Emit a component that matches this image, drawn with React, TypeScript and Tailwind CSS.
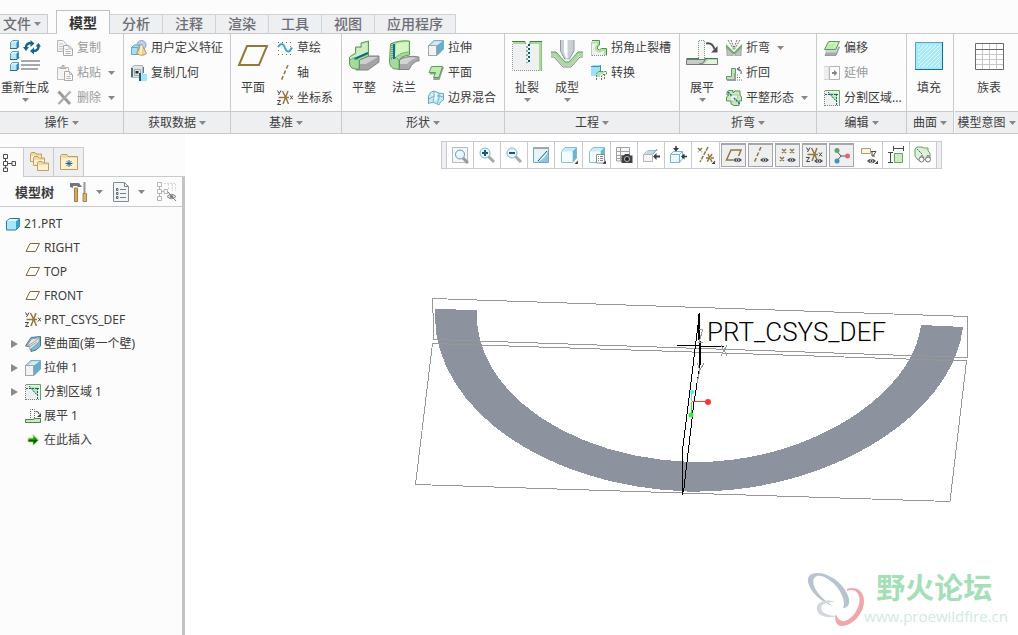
import type { ReactNode } from "react";

type IconProps = { w?: number; h?: number; children: ReactNode };

function Icon({ w = 16, h = w, children }: IconProps) {
  return (
    <svg width={w} height={h} viewBox={`0 0 ${w} ${h}`} fill="none" aria-hidden="true" className="shrink-0">
      {children}
    </svg>
  );
}

const Caret = () => (
  <Icon w={7} h={4}>
    <path d="M0 0H7L3.5 4Z" fill="#878787" />
  </Icon>
);

/* ---------- shared shapes ---------- */

const Cube = ({ x, y }: { x: number; y: number }) => (
  <g transform={`translate(${x} ${y})`}>
    <path d="M.5 2.5L2.5 .5H8.5V6.5L6.5 8.5H.5Z" fill="#b4e8f8" stroke="#5b9db8" />
    <path d="M6.5 2.5L8.5 .5V6.5L6.5 8.5Z" fill="#2b86ab" />
    <path d="M1 2.5L2.5 1H8L6.5 2.5Z" fill="#e2f6fc" />
    <path d="M0 8.500H7L9 6.500" stroke="#1f6c8d" />
  </g>
);

const Eye = ({ x, y }: { x: number; y: number }) => (
  <g transform={`translate(${x} ${y})`}>
    <path d="M0 3Q4.500 -1.500 9 3Q4.500 7.500 0 3Z" fill="#4b4f54" />
    <circle cx="4.500" cy="3" r="1.800" fill="#e8e8e8" />
    <circle cx="4.500" cy="3" r="1" fill="#333" />
  </g>
);

const Corner = () => <path d="M18 14.500V18H14.500Z" fill="#444" />;

/* ---------- ribbon icons ---------- */

const RegenerateIcon = () => (
  <Icon w={32}>
    <Cube x={1} y={0} />
    <Cube x={1} y={11} />
    <Cube x={1} y={22} />
    <path d="M17 8C16.500 4.500 19 3 22.500 3" stroke="#15668a" strokeWidth="2.500" />
    <path d="M21.500 0L25.500 3.500L21.500 7Z" fill="#15668a" />
    <path d="M29.500 5C30 9 28 11 24.500 11" stroke="#15668a" strokeWidth="2.500" />
    <path d="M25 7.500L21 11L25 14.500Z" fill="#15668a" />
    <path d="M14 7H20L17 11Z" fill="#15668a" />
    <path d="M26.500 6.500H32L29.500 3Z" fill="#15668a" />
    <path d="M12 21H31M12 25H31M12 29H29" stroke="#a6a8ab" strokeWidth="2" />
  </Icon>
);

const CopyIcon = () => (
  <Icon>
    <path d="M.5 .5H6L9.500 4V11.500H.5Z" fill="#f4f4f4" stroke="#b4b4b4" />
    <path d="M2 4H6M2 6.500H6M2 9H6" stroke="#c4c4c4" />
    <path d="M6.500 5.500H12L15.500 9V15.500H6.500Z" fill="#f8f8f8" stroke="#a8a8a8" />
    <path d="M12 5.500V9H15.500M8.500 9.500H11M8.500 11.500H13.500M8.500 13.500H13.500" stroke="#b5b5b5" />
  </Icon>
);

const PasteIcon = () => (
  <Icon>
    <path d="M.5 2.500H11.500V14.500H.5Z" fill="#f5f5f5" stroke="#bdbdbd" />
    <path d="M3 3.500L4.500 1.500H5.500V0H7V1.500L9 3.500Z" fill="#ccc" stroke="#adadad" />
    <path d="M7.500 6.500H12.500L15.500 9.500V15.500H7.500Z" fill="#fafafa" stroke="#a8a8a8" />
    <path d="M12.500 6.500V9.500H15.500M9.500 11.500H13.500M9.500 13.500H13.500" stroke="#b8b8b8" />
  </Icon>
);

const DeleteIcon = () => (
  <Icon>
    <path d="M1.500 1.500L13 14" stroke="#9b9b9b" strokeWidth="3" />
    <path d="M13.500 1.500L1.500 14" stroke="#a8a8a8" strokeWidth="2" />
  </Icon>
);

const FeatureIcon = () => (
  <Icon>
    <circle cx="10.500" cy="5" r="4.500" fill="#c2cdee" stroke="#8d9ccc" />
    <path d="M.5 7.500L3 5H9V12L7 14.500H.5Z" fill="#a9def0" stroke="#5fabc7" />
    <path d="M.5 7.500H7V14.500M7 7.500L9 5" stroke="#5fabc7" />
    <path d="M10.500 4L15.500 13.500Q11 17 5.500 13.500Z" fill="#f2cf91" stroke="#b8965b" />
    <path d="M10.500 5.500L9.500 14.500" stroke="#fff0cf" strokeWidth="2" />
  </Icon>
);

const CopyGeometryIcon = () => (
  <Icon>
    <path d="M.5 2.500L3 .5H11.500V9.500L9 12.500H.5Z" fill="#e3e4e6" stroke="#b2b4b7" />
    <path d="M0 3H2V12H0Z" fill="#4a7282" />
    <path d="M3.500 4.500H9.500V10.500H3.500Z" fill="#e6e6e6" stroke="#a2a2a2" />
    <path d="M4.500 6H7.500V8.500H4.500Z" fill="#1f2d38" />
    <path d="M9 9H16V16H9Z" fill="#a2e4fa" />
    <path d="M9 8V16" stroke="#155d7c" strokeWidth="2" />
    <path d="M12.500 2V8" stroke="#3c83a2" />
  </Icon>
);

const DatumPlaneIcon = () => (
  <Icon w={32}>
    <path d="M10 6H30L22 25H2Z" fill="#fdfcf9" stroke="#94763f" strokeWidth="2" />
  </Icon>
);

const SketchIcon = () => (
  <Icon>
    <path d="M1 2.500H16M1 14.500H16" stroke="#666" strokeDasharray="1 3" />
    <path d="M1 6.500H3M13 6.500H16M1 10.500H3M13 10.500H16" stroke="#888" strokeDasharray="1 2" />
    <path d="M1 7C5 1.500 7 5 8 8C9.500 12 12 13.500 15 7.500" stroke="#3da3ce" strokeWidth="2" />
  </Icon>
);

const AxisIcon = () => (
  <Icon>
    <path d="M11 0L4 16" stroke="#94763f" strokeWidth="1.500" strokeDasharray="4 2" />
  </Icon>
);

const CsysShape = () => (
  <>
    <path d="M1.500 7.500H12M5.500 1L9 8L11.500 14M11 1L6 14" stroke="#94763f" strokeWidth="1.500" />
    <path d="M.5 .5L2 3M4 .5L1.500 5M0 10.500H3.500L.5 14.500H4M13 5.500L16 9.500M16 5.500L13 9.500" stroke="#444" />
  </>
);
const CsysIcon = () => (
  <Icon>
    <CsysShape />
  </Icon>
);

const FlatWallIcon = () => (
  <Icon w={32}>
    <path d="M11 20L20 16H31V22L20 30H8Z" fill="#a4a4a6" stroke="#838385" />
    <path d="M12 20L20 17H30L18 24H11Z" fill="#cfcfd1" />
    <path d="M1.500 17L7.500 13V7H13V3L20.500 1V16L11.500 20V29H8C3.500 29 1.500 26 1.500 23Z" fill="#a8d89b" stroke="#579f57" />
    <path d="M8.500 14V8H14V4L19.500 2.500V12L6 18Z" fill="#cdeebf" />
    <path d="M6.500 19L20 13" stroke="#0b668f" strokeWidth="2" />
    <path d="M2 20Q7 16 11 21V28" stroke="#579f57" strokeDasharray="1 1" />
    <path d="M2 18L8 15" stroke="#e6f8dc" />
  </Icon>
);

const FlangeIcon = () => (
  <Icon w={32}>
    <path d="M12 19Q20 15 31 17V21Q26 20 21 29.500H10Z" fill="#a8a9ac" stroke="#838385" />
    <path d="M12 20Q20 16 29 18Q23 19 19 24H11Z" fill="#d3d4d6" />
    <path d="M2.500 4Q10 0 21.500 1V15Q13 16 11.500 20V29H7C3 28 1.500 25 1.500 21Z" fill="#a8d89b" stroke="#579f57" />
    <path d="M8 4Q13 1.500 20.500 2V12Q12 12 7 18Z" fill="#d6f5bf" />
    <path d="M6 4V19" stroke="#0a6da0" strokeWidth="2" />
    <path d="M4 3V19M3 19Q9 16 11 21V28M7 18Q13 12 21 12" stroke="#367b4b" strokeDasharray="1 1" />
  </Icon>
);

const ExtrudeIcon = () => (
  <Icon>
    <path d="M.5 5.500L6 .5H15.500V9L9 15.500H.5Z" fill="#a9d7ea" stroke="#7db0c5" />
    <path d="M9 5.500L15.500 .5V9L9 15.500Z" fill="#68acc9" />
    <path d="M3 5L7 1.500H14L9 5Z" fill="#d5ecf6" />
    <path d="M.5 5.500H8.500V15.500H.5Z" fill="#f1f2f3" stroke="#a3a5a7" />
  </Icon>
);

const PlanarIcon = () => (
  <Icon>
    <path d="M4 2H16L11.500 15H5L7 9.500H1.500Z" fill="#9e9fa0" />
    <path d="M3.500 1.500H14.500L11 12.500H5.500L7.500 7.500H1Z" fill="#bcedaa" stroke="#609a62" />
  </Icon>
);

const BlendIcon = () => (
  <Icon>
    <path d="M.5 7Q1 2 6 1Q11 4 15.500 3.500V10Q12 11 11 15Q5 11 .5 13.500Z" fill="#c8ecf9" stroke="#6ba8c0" />
    <path d="M6 1Q7 6 5 12M11 3Q12 8 9 14M1 9Q8 4 15.500 7" stroke="#72afc7" />
    <path d="M7.500 3Q8.500 6 7 10" stroke="#fff" strokeWidth="2" />
  </Icon>
);

const RipIcon = () => (
  <Icon w={32}>
    <path d="M2 3H16V22H18V3H28V30H2Z" fill="#eef0f2" />
    <path d="M1.500 4V30.500H28" stroke="#909396" strokeDasharray="1 1" />
    <path d="M1 1.500H14V4M19 4V1.500H31" stroke="#457d43" />
    <path d="M2 3H13M20 3H29V31" stroke="#a7db91" strokeWidth="2" />
    <path d="M30.500 2V31" stroke="#8fc37d" />
    <path d="M16 6V23" stroke="#8fb09a" strokeWidth="2" strokeDasharray="2 2" />
    <path d="M18 4V23" stroke="#0b587a" strokeWidth="2" strokeDasharray="2 2" />
  </Icon>
);

const FormIcon = () => (
  <Icon w={32}>
    <path d="M9.500 0V11L14 19.500H18L23 11V0Z" fill="#c8cfd5" />
    <path d="M13 0V12L15 18H16.500V0Z" fill="#fff" />
    <path d="M9.500 0V11L14 19.500M23 0V11L18 19.500" stroke="#8f989f" />
    <path d="M0 14H4L13 24H19L28 14H32" stroke="#a9daa0" strokeWidth="4" />
    <path d="M0 12H5L14 22H18L27 12H32" stroke="#609a5f" />
    <path d="M0 17H3L12 27H20L29 17H32" stroke="#808080" />
  </Icon>
);

const CornerReliefIcon = () => (
  <Icon>
    <path d="M1 1H8V5Q5 6 6 9Q8 12 11 8H15V15H1Z" fill="#edf0ed" />
    <path d="M.5 15.500V2M1 15.500H15" stroke="#888" strokeDasharray="1 1" />
    <path d="M1 2.500H7V5Q4.500 6 5 9.500Q7.500 13 11.500 10H14V15" stroke="#b2dfa2" strokeWidth="2" />
    <path d="M1 .5H8.500V5Q5.500 6 6.500 9Q8.500 11 10.500 8.500H15.500V15.500" stroke="#4d8f4e" />
  </Icon>
);

const ConversionIcon = () => (
  <Icon>
    <path d="M0 2L2 0H10V9L8 11H0Z" fill="#9fe2f8" />
    <path d="M0 1.500H8L9.500 .5V7" stroke="#3c8db0" />
    <path d="M5.500 15V8.500L8 6.500H15.500V9L13.500 10V15M10.500 15V11L12 9.500H15" stroke="#5b8352" strokeDasharray="2 1" />
    <path d="M6 9L8 7H14L12 9H9V12H6Z" fill="#b9dfac" />
  </Icon>
);

const UnbendIcon = () => (
  <Icon w={32}>
    <path d="M.5 19.500H18L21.500 18.500H31.500V24.500H.5Z" fill="#c9cbcb" stroke="#747974" />
    <path d="M.5 18.500H13M19 18.500H31.500" stroke="#3e8540" />
    <path d="M22 20H31V24H18Z" fill="#e3f4dc" />
    <path d="M12.500 18V.5H18.500V18" fill="#f4f4f4" stroke="#6fa171" strokeDasharray="1 1" />
    <path d="M13 24Q19 24 19 18" stroke="#4e854c" />
    <path d="M20 3.500Q26 2 28.500 9" stroke="#4c5053" strokeWidth="2" />
    <path d="M31.500 6V12.500H25Z" fill="#4c5053" />
  </Icon>
);

const BendIcon = () => (
  <Icon>
    <path d="M0 7L7 14V16H1V11ZM16 7L9 14V16H15V11Z" fill="#bfc1c3" stroke="#a0a2a4" />
    <path d="M0 5L8 13L16 5" stroke="#6ba268" strokeWidth="2" />
    <path d="M0 4L8 12L16 4" stroke="#c1ecb5" />
    <path d="M2 0L8 10M14 0L8 10M5 0L8 8M11 0L8 8" stroke="#70746f" strokeDasharray="2 1" />
  </Icon>
);

const BendBackIcon = () => (
  <Icon>
    <path d="M.5 11.500H5.500V3.500H9.500V14.500H.5Z" fill="#c0e4ae" stroke="#629a63" />
    <path d="M1 15H9V8" stroke="#9b9e9f" strokeWidth="2" />
    <path d="M11 10H13M11 12.500H15M11 15H16" stroke="#4c8750" strokeDasharray="1 1" />
    <path d="M15 9Q16 4 12 4M14 2L11 4L14 6" stroke="#53575a" />
  </Icon>
);

const FlatPatternIcon = () => (
  <Icon>
    <path d="M1 2L3 .5H7V3L9 1H14V5L15.500 7V11H13V15.500H8L5 14V11H.5V7L3 5H1Z" fill="#cbe8bf" stroke="#559456" />
    <path d="M4 7Q6 4 9 5H12L11 9Q8 12 6 11" fill="#eef3ec" stroke="#a8cc9a" />
    <path d="M2 2L6 6M8 8L14 14" stroke="#13698d" strokeWidth="1.500" strokeDasharray="2 1" />
  </Icon>
);

const OffsetIcon = () => (
  <Icon>
    <path d="M5 7H15.500L12 15.500H1Z" fill="#a8aaad" stroke="#97999c" />
    <path d="M5 4L15 6L12 12.500H1L2 9Z" fill="#d2d4d6" />
    <path d="M4.500 1.500H15.500L11.500 9.500H.5Z" fill="#baf0a7" stroke="#609a62" />
    <path d="M5 3H13L10 8" stroke="#d9fbc9" />
  </Icon>
);

const ExtendIcon = () => (
  <Icon>
    <path d="M0 1.500H5V14.500H0" fill="#eceef0" stroke="#d4d6d8" />
    <path d="M5.500 1.500H15.500V14.500H5.500Z" fill="#fff" stroke="#b4b4b4" />
    <path d="M8 8H11" stroke="#858585" strokeWidth="2" />
    <path d="M10 5L13.500 8L10 11Z" fill="#858585" />
  </Icon>
);

const SplitAreaIcon = () => (
  <Icon>
    <path d="M0 0H16V16H0Z" fill="#eff1f0" />
    <path d="M.5 16V1M1 15.500H15" stroke="#797d7f" strokeDasharray="1 1" />
    <path d="M1 .5H15.500V16" stroke="#67a662" />
    <path d="M3.500 2.500H13V12Z" fill="#b9e9b0" />
    <path d="M1 4.500H14M4 2L13 12M12.500 4V15" stroke="#175f80" strokeDasharray="2 1" />
  </Icon>
);

const FillIcon = () => (
  <Icon w={32}>
    <defs>
      <pattern id="hatch" width="4" height="4" patternUnits="userSpaceOnUse">
        <path d="M-1 1L1 -1M0 4L4 0M3 5L5 3" stroke="#e9fbff" />
      </pattern>
    </defs>
    <path d="M2 2H30V30H2Z" fill="#a6e9fb" />
    <path d="M5 5H27V27H5Z" fill="url(#hatch)" />
    <path d="M2.500 2.500H29.500V29.500H2.500Z" stroke="#5aa3bf" />
    <path d="M2 29.500H29.500V2" stroke="#166e90" />
  </Icon>
);

const FamilyTableIcon = () => (
  <Icon w={32}>
    <path d="M2.500 3.500H30.500V29.500H2.500Z" fill="#fff" />
    <path d="M9.500 4V29M16.500 4V29M23.500 4V29M3 14.500H30M3 19.500H30M3 24.500H30" stroke="#c6c6c6" />
    <path d="M2.500 3.500H30.500V29.500H2.500ZM3 9.500H30" stroke="#6a6a6d" />
  </Icon>
);

/* ---------- ribbon building blocks ---------- */

function BigTool({ icon, label, menu }: { icon: ReactNode; label: string; menu?: boolean }) {
  return (
    <button type="button" className="flex min-w-10 flex-col items-center pt-1.5 whitespace-nowrap">
      {icon}
      <span className="mt-2 leading-4">{label}</span>
      {menu && (
        <span className="mt-0.5 flex">
          <Caret />
        </span>
      )}
    </button>
  );
}

type Tool = { icon: ReactNode; label: string; menu?: boolean; disabled?: boolean };

function ToolList({ tools }: { tools: Tool[] }) {
  return (
    <div className="flex flex-col gap-px pt-0.5">
      {tools.map((t) => (
        <button
          key={t.label}
          type="button"
          disabled={t.disabled}
          className="flex h-6 items-center gap-1 whitespace-nowrap disabled:text-[#999]"
        >
          {t.icon}
          <span>{t.label}</span>
          {t.menu && (
            <span className="ml-[3px]">
              <Caret />
            </span>
          )}
        </button>
      ))}
    </div>
  );
}

function Group({ title, className, body, children }: { title: string; className: string; body?: string; children: ReactNode }) {
  return (
    <section className={`flex shrink-0 flex-col border-[#c9cacc] ${className}`}>
      <div className={`flex h-[77px] items-start ${body ?? ""}`}>{children}</div>
      <button
        type="button"
        className="flex h-[22px] items-center justify-center gap-[3px] border-t border-[#c9cacc] bg-[#eeeff1] whitespace-nowrap"
      >
        {title}
        <Caret />
      </button>
    </section>
  );
}

function Ribbon() {
  return (
    <div className="flex overflow-hidden border-b border-[#c9cacc]">
      <Group title="操作" className="w-[124px] border-r" body="gap-2 pl-px">
        <BigTool icon={<RegenerateIcon />} label="重新生成" menu />
        <ToolList
          tools={[
            { icon: <CopyIcon />, label: "复制", disabled: true },
            { icon: <PasteIcon />, label: "粘贴", menu: true, disabled: true },
            { icon: <DeleteIcon />, label: "删除", menu: true, disabled: true },
          ]}
        />
      </Group>
      <Group title="获取数据" className="w-[107px] border-r" body="pl-[7px]">
        <ToolList
          tools={[
            { icon: <FeatureIcon />, label: "用户定义特征" },
            { icon: <CopyGeometryIcon />, label: "复制几何" },
          ]}
        />
      </Group>
      <Group title="基准" className="w-[111px] border-r" body="gap-1 pl-0.5">
        <BigTool icon={<DatumPlaneIcon />} label="平面" />
        <ToolList
          tools={[
            { icon: <SketchIcon />, label: "草绘" },
            { icon: <AxisIcon />, label: "轴" },
            { icon: <CsysIcon />, label: "坐标系" },
          ]}
        />
      </Group>
      <Group title="形状" className="w-[163px] border-r" body="pl-0.5">
        <BigTool icon={<FlatWallIcon />} label="平整" />
        <BigTool icon={<FlangeIcon />} label="法兰" />
        <div className="pl-1">
          <ToolList
            tools={[
              { icon: <ExtrudeIcon />, label: "拉伸" },
              { icon: <PlanarIcon />, label: "平面" },
              { icon: <BlendIcon />, label: "边界混合" },
            ]}
          />
        </div>
      </Group>
      <Group title="工程" className="w-[175px] border-r" body="pl-0.5">
        <BigTool icon={<RipIcon />} label="扯裂" menu />
        <BigTool icon={<FormIcon />} label="成型" menu />
        <div className="pl-1">
          <ToolList
            tools={[
              { icon: <CornerReliefIcon />, label: "拐角止裂槽" },
              { icon: <ConversionIcon />, label: "转换" },
            ]}
          />
        </div>
      </Group>
      <Group title="折弯" className="w-[137px] border-r" body="gap-1 pl-0.5">
        <BigTool icon={<UnbendIcon />} label="展平" menu />
        <ToolList
          tools={[
            { icon: <BendIcon />, label: "折弯", menu: true },
            { icon: <BendBackIcon />, label: "折回" },
            { icon: <FlatPatternIcon />, label: "平整形态", menu: true },
          ]}
        />
      </Group>
      <Group title="编辑" className="w-[90px] border-r" body="pl-[7px]">
        <ToolList
          tools={[
            { icon: <OffsetIcon />, label: "偏移" },
            { icon: <ExtendIcon />, label: "延伸", disabled: true },
            { icon: <SplitAreaIcon />, label: "分割区域..." },
          ]}
        />
      </Group>
      <Group title="曲面" className="w-[47px] border-r" body="pl-0.5">
        <BigTool icon={<FillIcon />} label="填充" />
      </Group>
      <Group title="模型意图" className="min-w-16 grow pl-px" body="pl-3.5">
        <BigTool icon={<FamilyTableIcon />} label="族表" />
      </Group>
    </div>
  );
}

function RibbonTabs() {
  const rest = ["分析", "注释", "渲染", "工具", "视图", "应用程序"];
  return (
    <nav className="flex h-[34px] items-end border-b border-[#c9cacc] text-[14px] font-medium text-[#6d6e75]">
      <button
        type="button"
        className="mr-2 flex h-[19px] items-center gap-[3px] border-t border-r border-[#c9cacc] bg-[#eeeff1] pr-1.5 pl-[3px] whitespace-nowrap"
      >
        文件
        <Caret />
      </button>
      <button
        type="button"
        className="-mb-px h-6 border border-b-0 border-[#c0c1c4] bg-[#fcfcfc] px-3 font-bold whitespace-nowrap text-[#333]"
      >
        模型
      </button>
      {rest.map((t) => (
        <button
          key={t}
          type="button"
          className="flex h-[19px] items-center border-t border-r border-[#d0d1d4] bg-[#eeeff1] px-3 whitespace-nowrap"
        >
          {t}
        </button>
      ))}
    </nav>
  );
}

/* ---------- graphics toolbar ---------- */

const Magnifier = ({ sign }: { sign?: string }) => (
  <>
    <path d="M10.500 10.500L16 16" stroke="#a4a8ab" strokeWidth="3" />
    <circle cx="7" cy="7" r="5" fill="#eaf7fc" stroke="#7fb4ca" />
    {sign && <path d={sign} stroke="#155976" strokeWidth="2" />}
  </>
);

const ViewCube = () => (
  <>
    <path d="M1.500 5.500L5 1.500H16.500V12L12.500 16.500H1.500Z" fill="#c8ecf8" stroke="#86bed2" />
    <path d="M12.500 5.500L16.500 1.500V12L12.500 16.500Z" fill="#6cb3cf" />
    <path d="M2 5.500H12.500V16H2Z" fill="#f5fcff" />
  </>
);

const toolbar: { name: string; on?: boolean; menu?: boolean; icon: ReactNode }[] = [
  {
    name: "重新调整",
    icon: (
      <>
        <path d="M1.500 1.500H16.500V16.500H1.500Z" fill="#f6f7f8" stroke="#b7b9bc" />
        <path d="M12 12L17 17" stroke="#97999c" strokeWidth="3" />
        <circle cx="9" cy="8.500" r="4.500" fill="#eaf8fe" stroke="#549cbd" />
      </>
    ),
  },
  { name: "放大", icon: <Magnifier sign="M4 7H10M7 4V10" /> },
  { name: "缩小", icon: <Magnifier sign="M4 7H10" /> },
  {
    name: "重画",
    icon: (
      <>
        <path d="M1.500 1.500H16.500V16.500H1.500Z" fill="#8cc7de" stroke="#6fa9c0" />
        <path d="M2 3H16C16 9 11 14 5 16H2Z" fill="#e4f4f9" />
        <path d="M6 15L15 5" stroke="#145a79" />
        <path d="M1 2H17" stroke="#a4a7aa" strokeWidth="2" />
      </>
    ),
  },
  { name: "显示样式", menu: true, icon: <ViewCube /> },
  {
    name: "已保存方向",
    menu: true,
    icon: (
      <>
        <ViewCube />
        <path d="M8.500 8.500H16.500V17H8.500Z" fill="#fff" stroke="#8b8e91" />
        <path d="M10 10.500H11M12 10.500H15M10 12.500H11M12 12.500H15M10 14.500H11M12 14.500H15" stroke="#888" />
      </>
    ),
  },
  {
    name: "视图管理器",
    icon: (
      <>
        <path d="M1.500 1.500H14.500V15H1.500ZM5.500 2V15M1.500 5.500H14M1.500 9.500H14M1.500 12.500H7" fill="#f7f7f7" stroke="#9fa1a3" />
        <path d="M6.500 9.500H9L10 8H14L15 9.500H17.500V17H6.500Z" fill="#3d4247" />
        <circle cx="12" cy="13" r="2.500" fill="#222" stroke="#b7bbc0" />
      </>
    ),
  },
  {
    name: "移除",
    icon: (
      <>
        <path d="M1.500 8.500L5.500 4.500H15.500M1.500 8.500V15.500H10.500V8.500Z" fill="#f5f5f5" stroke="#b4b7ba" />
        <path d="M4 7L6 5H14L11 8H3Z" fill="#b5def0" />
        <path d="M11 8L15 3" stroke="#67a9c1" />
        <path d="M13 10.500H18" stroke="#3d4144" strokeWidth="2" />
        <path d="M14.500 7V14L11 10.500Z" fill="#3d4144" />
      </>
    ),
  },
  {
    name: "排除",
    icon: (
      <>
        <path d="M1.500 8.500L4.500 5.500H13.500V13L10.500 16.500H1.500Z" fill="#eaf9ff" stroke="#7cb2c9" />
        <path d="M1.500 8.500H10.500V16M10.500 8.500L13.500 5.500" stroke="#7cb2c9" />
        <path d="M7 0V3M18 10.500H15" stroke="#33373a" strokeWidth="1.500" />
        <path d="M4 2H10L7 5.500ZM15.500 7.500V13.500L12 10.500Z" fill="#33373a" />
      </>
    ),
  },
  {
    name: "基准显示",
    menu: true,
    icon: (
      <path
        d="M1 2L5 6M5 2L1 6M11 1L3 16M9 12H17M11 8L15 16M15 8L10 16"
        stroke="#94763f"
        strokeWidth="1.500"
        strokeDasharray="4 1"
      />
    ),
  },
  {
    name: "平面显示",
    on: true,
    icon: (
      <>
        <path d="M6 3H16L12 13H1.500Z" stroke="#94763f" strokeWidth="1.500" />
        <path d="M8 9H18V17H8Z" fill="#eef0f2" />
        <Eye x={8} y={10} />
      </>
    ),
  },
  {
    name: "轴显示",
    on: true,
    icon: (
      <>
        <path d="M9 0L2 16" stroke="#94763f" strokeWidth="1.500" strokeDasharray="4 2" />
        <Eye x={8} y={10} />
      </>
    ),
  },
  {
    name: "点显示",
    on: true,
    icon: (
      <>
        <path d="M3 2L7 6M7 2L3 6M11 2L15 6M15 2L11 6M1 10L5 14M5 10L1 14" stroke="#94763f" strokeWidth="1.500" />
        <Eye x={8} y={10} />
      </>
    ),
  },
  {
    name: "坐标系显示",
    on: true,
    icon: (
      <>
        <CsysShape />
        <Eye x={8} y={11} />
      </>
    ),
  },
  {
    name: "旋转中心",
    on: true,
    icon: (
      <>
        <path d="M3.500 4L8 9H15M8 9L4 14" stroke="#555" />
        <circle cx="4" cy="3.500" r="2.500" fill="#58aa61" />
        <circle cx="4" cy="14" r="2.500" fill="#3c94b8" />
        <circle cx="14.500" cy="9" r="2.500" fill="#e46566" />
      </>
    ),
  },
  {
    name: "注释显示",
    menu: true,
    icon: (
      <>
        <path d="M1.500 2.500H10.500V7.500H1.500Z" fill="#fdf7e2" stroke="#ad9d75" />
        <path d="M11 5.500H16L13 10M12 6V10H15" stroke="#46494b" />
        <Eye x={7} y={12} />
      </>
    ),
  },
  {
    name: "尺寸",
    icon: (
      <>
        <path d="M7.500 7.500H15.500V16.500H7.500Z" fill="#cbeec2" stroke="#67a565" />
        <path d="M7 2.500H16M6.500 0V5M16.500 0V5M3.500 7V16M1 6.500H6M1 16.500H6" stroke="#43464a" />
      </>
    ),
  },
  {
    name: "展平预览",
    icon: (
      <>
        <path d="M1 3L3 1H8L10 2H14V5L16 7V12H13L10 14H4L1 10Z" fill="#def0d8" stroke="#64a161" />
        <path d="M3 3L8 8" stroke="#176b8b" strokeDasharray="2 1" />
        <path d="M6 12L8 9L10 12M12 12L14 9L16 12" stroke="#7b7f81" />
        <circle cx="7.500" cy="13.500" r="2.500" fill="#f7f7f7" stroke="#747779" />
        <circle cx="14" cy="13.500" r="2.500" fill="#f7f7f7" stroke="#747779" />
      </>
    ),
  },
];

function GraphicsToolbar() {
  return (
    <div role="toolbar" className="flex h-7 border border-[#c9cacf] bg-white">
      <span className="w-[5px] border-r border-[#c9cacf] bg-[#eeeff3]" />
      {toolbar.map((b) => (
        <button
          key={b.name}
          type="button"
          aria-label={b.name}
          aria-pressed={b.on}
          className={`flex items-center justify-center border-r border-[#c9cacf] aria-pressed:m-px aria-pressed:w-[25px] aria-pressed:border aria-pressed:border-t-2 aria-pressed:border-[#a5a7ac] aria-pressed:bg-[#edeff1] ${b.menu ? "w-7" : "w-[27px]"}`}
        >
          <Icon w={18}>
            {b.icon}
            {b.menu && <Corner />}
          </Icon>
        </button>
      ))}
      <span className="w-1 bg-[#eeeff3]" />
    </div>
  );
}

/* ---------- model tree ---------- */

const SmallPlane = () => (
  <Icon>
    <path d="M5 3.500H14.500L10.500 11.500H1Z" stroke="#7f6a3d" />
  </Icon>
);

const PartIcon = () => (
  <Icon w={14}>
    <path d="M.5 4L4 1.500H13.500V9.500L10 13H.5Z" fill="#a8e6fa" stroke="#287c9f" />
    <path d="M10 4L13.500 1.500V9.500L10 13Z" fill="#3ba1cc" />
    <path d="M1 4L4 2H12.500L10 4Z" fill="#e0f8ff" />
  </Icon>
);

const WallIcon = () => (
  <Icon>
    <path d="M.5 10L6 1.500L15.500 .5V10L11 14L6 15.500V11Z" fill="#7db6ce" stroke="#367b99" />
    <path d="M1.500 10L6.500 3L14.500 1.500L14 6L5 14V10Z" fill="#e2e5e7" stroke="#919da5" />
    <path d="M2 10Q7 8 14 2M4 11L12 6" stroke="#a4acb1" />
  </Icon>
);

const SmallUnbendIcon = () => (
  <Icon>
    <path d="M.5 11.500H8L10 10.500H15.500V14.500H.5Z" fill="#cfe9c3" stroke="#4f8148" />
    <path d="M5.500 10V1.500H9.500V10" stroke="#666" strokeDasharray="1 1" />
    <path d="M10.500 3.500Q13.500 3 14 6" stroke="#444" />
    <path d="M16 5V9H12Z" fill="#444" />
  </Icon>
);

const InsertIcon = () => (
  <Icon>
    <path d="M3 6H8V2.500L13.500 8L8 13.500V10H3Z" fill="#179b16" stroke="#d5e891" />
    <path d="M3.500 8H13L8.500 12.500V9.500H3.500Z" fill="#075f08" />
  </Icon>
);

const treeRows: { label: string; icon: ReactNode; expand?: boolean }[] = [
  { label: "RIGHT", icon: <SmallPlane /> },
  { label: "TOP", icon: <SmallPlane /> },
  { label: "FRONT", icon: <SmallPlane /> },
  { label: "PRT_CSYS_DEF", icon: <CsysIcon /> },
  { label: "壁曲面(第一个壁)", icon: <WallIcon />, expand: true },
  { label: "拉伸 1", icon: <ExtrudeIcon />, expand: true },
  { label: "分割区域 1", icon: <SplitAreaIcon />, expand: true },
  { label: "展平 1", icon: <SmallUnbendIcon /> },
  { label: "在此插入", icon: <InsertIcon /> },
];

const FolderShape = ({ x, y }: { x: number; y: number }) => (
  <g transform={`translate(${x} ${y})`}>
    <path d="M.5 2V9.500H11.500V2H6L5 .5H1.500Z" fill="#f3d9a3" stroke="#c09f66" />
    <path d="M1 4H11V9H1Z" fill="#fff1cf" />
  </g>
);

function ModelTree() {
  return (
    <aside className="flex w-[185px] shrink-0 flex-col pt-[13px]">
      <div className="flex h-[30px]">
        <button type="button" aria-label="模型树" className="w-6 border-t border-r border-[#c9cacc] bg-[#fcfcfc]">
          <Icon w={18}>
            <path
              d="M3.500 4.500H7.500V.5H3.500ZM3.500 11.500H7.500V7.500H3.500ZM3.500 17.500H7.500V14H3.500ZM12 11.500H15.500V7.500H12ZM5.500 4.500V7.500M5.500 11.500V14M7.500 9.500H12"
              stroke="#4c4c4c"
            />
          </Icon>
        </button>
        <button
          type="button"
          aria-label="文件夹浏览器"
          className="flex w-[30px] items-center justify-center border-t border-r border-b border-[#c9cacc] bg-[#eeeff1]"
        >
          <Icon w={20}>
            <FolderShape x={1} y={0} />
            <FolderShape x={4} y={4} />
            <FolderShape x={8} y={9} />
          </Icon>
        </button>
        <button
          type="button"
          aria-label="收藏夹"
          className="flex w-[30px] items-center justify-center border-t border-r border-b border-[#c9cacc] bg-[#eeeff1]"
        >
          <Icon w={18}>
            <path d="M.5 2.500V16.500H17.500V3.500H8L7 1.500H1.500Z" fill="#f2d9a7" stroke="#c09f66" />
            <path d="M1 5H17V16H1Z" fill="#fff1d0" />
            <path d="M9 7V14M5.500 10.500H12.500M6.500 8L11.500 13M11.500 8L6.500 13" stroke="#196689" />
          </Icon>
        </button>
        <span className="grow border-b border-[#c9cacc]" />
      </div>
      <div className="flex grow flex-col border-r-[3px] border-[#c0c4c9]">
        <div className="flex h-[30px] items-center border-b border-[#c9cacc] pl-[15px]">
          <h2 className="text-[13px] font-bold">模型树</h2>
          <button type="button" aria-label="设置" className="ml-4 flex items-center gap-2">
            <Icon w={18} h={20}>
              <path d="M4.500 6H7.500V19.500H4.500Z" fill="#d6a75f" stroke="#a27d42" />
              <path d="M0 5V1H9L12 5H8L7 4H3V6Z" fill="#72767b" />
              <path d="M14.500 0V11" stroke="#95999c" strokeWidth="2" />
              <path d="M13 11.500H16.500V19.500H13Z" fill="#dfb16b" stroke="#a98548" />
            </Icon>
            <Caret />
          </button>
          <button type="button" aria-label="显示" className="ml-2.5 flex items-center gap-2">
            <Icon w={17} h={20}>
              <path d="M.5 .5H11.500L15.500 4.500V19.500H.5Z" fill="#f1f5f7" stroke="#838c91" />
              <path d="M11.500 .5V4.500H15.500M7 7.500H13M7 11.500H13M7 15.500H13" stroke="#788187" />
              <path d="M3.500 6.500H5V8.500H3.500ZM3.500 10.500H5V12.500H3.500ZM3.500 14.500H5V16.500H3.500Z" stroke="#62696e" />
            </Icon>
            <Caret />
          </button>
          <button type="button" aria-label="隐藏列" className="ml-3">
            <Icon w={20}>
              <path
                d="M.5 .5H4.500V4.500H.5ZM.5 7.500H4.500V11.500H.5ZM.5 14.500H4.500V18.500H.5ZM7 7.500H10.500V11.500H7ZM2.500 5V7.500M2.500 12V14M5 9.500H7"
                stroke="#b4b4b4"
              />
              <path d="M7 1.500H18M11.500 2V7M15.500 2V9M18.500 2V9" stroke="#d4d4d4" strokeDasharray="2 1" />
              <path d="M10 14.500Q14.500 10 19 14.500Q14.500 19 10 14.500Z" fill="#d9d9d9" stroke="#8a8a8a" />
              <path d="M11 10L19 19" stroke="#777" />
              <circle cx="14.500" cy="14.500" r="1.500" fill="#777" />
            </Icon>
          </button>
        </div>
        <ul className="pt-[5px]">
          <li className="flex h-6 items-center gap-1 pl-1.5">
            <PartIcon />
            21.PRT
          </li>
          {treeRows.map((r) => (
            <li key={r.label} className="flex h-6 items-center gap-[3px] whitespace-nowrap">
              <span className="flex w-[22px] justify-end pr-1">
                {r.expand && (
                  <Icon w={8}>
                    <path d="M1 0L8 4L1 8Z" fill="#8a8a8a" />
                  </Icon>
                )}
              </span>
              {r.icon}
              <span>{r.label}</span>
            </li>
          ))}
        </ul>
      </div>
    </aside>
  );
}

/* ---------- 3D scene ---------- */

function Scene() {
  return (
    <svg viewBox="185 169 833 466" className="block w-full" role="img" aria-label="PRT_CSYS_DEF">
      <g shapeRendering="crispEdges" fill="none">
        <path
          d="M435 309C430 405 541 486 687 491.500C826 495 953 416 963 327L921 325C913 395 807 464 691 462C568 458 473 390 477 310Z"
          fill="#8c939f"
        />
        <path d="M432.500 298.500L967.500 316.500V357.500L434 339.500Z" stroke="#979797" />
        <path d="M432.500 343.500L966.500 361L950 501.500L415.500 484.500Z" stroke="#979797" />
        <path d="M699.500 313L690 390L682.500 450V495M700.500 362L694 402L683.500 492" stroke="#000" />
        <path d="M699 314L700 365" stroke="#000" strokeWidth="2" />
        <path d="M677 345.500H700M700 346.500H724" stroke="#000" />
        <path d="M721 345L727 356M727 345L721 356" stroke="#999" />
        <path d="M697 363L700 370L704 363M700 370L697 383M699 329H703L699 342H703" stroke="#999" />
        <path d="M692 401.500H706" stroke="#f33" />
        <path d="M691.500 402V415" stroke="#3e3" />
        <path d="M691.500 401V393" stroke="#4ee" />
      </g>
      <circle cx="708" cy="402" r="3" fill="#f33" />
      <circle cx="691" cy="415" r="2.500" fill="#3e3" />
      <circle cx="692" cy="392" r="2" fill="#4ee" />
      <text x="707" y="341" fill="#000" className="font-['Roboto'] text-[26px] font-light">
        PRT_CSYS_DEF
      </text>
    </svg>
  );
}

function Watermark() {
  return (
    <div className="absolute right-2.5 bottom-[7px] flex items-end">
      <svg width="58" height="56" viewBox="0 0 58 56" aria-hidden="true">
        <path
          fillRule="evenodd"
          d="M4 2C17-3 38 12 41 27C42 33 39 36 35 36C39 28 30 12 18 6C9 1 3 5 6 14C9 22 18 30 25 34C13 30 1 19 0 9C0 5 1 3 4 2Z"
          fill="#b7c3ce"
        />
        <path d="M27 30C19 26 7 30 9 38C10 44 20 47 29 44C21 44 13 41 13 36C14 31 20 30 27 30Z" fill="#d0d7dd" />
        <path
          fillRule="evenodd"
          d="M39 17C47 14 56 18 56 29C56 42 44 54 34 54C28 54 26 48 28 42C30 49 35 51 41 47C50 41 54 28 50 22C48 18 44 17 39 19Z"
          fill="#f0a6aa"
        />
      </svg>
      <div className="-ml-0.5">
        <div className="pl-3 font-['Noto_Sans_CJK_SC',sans-serif] text-[29px] leading-9 font-bold text-[#a5dfb7]">野火论坛</div>
        <div className="font-['Open_Sans',sans-serif] text-[15px] leading-6 text-[#cfe9e3]">www.proewildfire.cn</div>
      </div>
    </div>
  );
}

export default function App() {
  return (
    <div className="flex min-h-screen flex-col bg-[#fcfcfc] font-['Noto_Sans','Noto_Sans_CJK_SC',sans-serif] text-[12px] leading-4 text-[#3c3c3c]">
      <header>
        <RibbonTabs />
        <Ribbon />
      </header>
      <div className="flex grow">
        <ModelTree />
        <main className="relative min-w-0 grow bg-white">
          <div className="flex justify-end pt-[7px] pr-[76px]">
            <GraphicsToolbar />
          </div>
          <Scene />
          <Watermark />
        </main>
      </div>
    </div>
  );
}
